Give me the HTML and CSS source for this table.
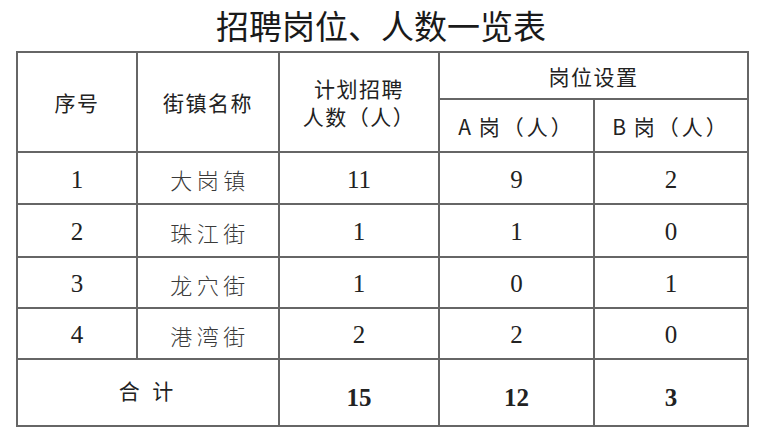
FILE: index.html
```html
<!DOCTYPE html>
<html lang="zh-CN">
<head>
<meta charset="utf-8">
<title>招聘岗位、人数一览表</title>
<link rel="stylesheet" href="styles.css">
</head>
<body>
<div class="page">
  <h1 class="title">招聘岗位、人数一览表</h1>
  <table class="grid">
    <colgroup>
      <col class="c1"><col class="c2"><col class="c3"><col class="c4"><col class="c5">
    </colgroup>
    <thead>
      <tr class="h1">
        <th rowspan="2">序号</th>
        <th rowspan="2">街镇名称</th>
        <th rowspan="2" class="plan">计划招聘<br>人数（人）</th>
        <th colspan="2">岗位设置</th>
      </tr>
      <tr class="h2">
        <th class="ab"><span class="lat">A</span> 岗（人）</th>
        <th class="ab"><span class="lat">B</span> 岗（人）</th>
      </tr>
    </thead>
    <tbody>
      <tr class="r1"><td class="num">1</td><td class="name">大岗镇</td><td class="num">11</td><td class="num">9</td><td class="num">2</td></tr>
      <tr class="r2"><td class="num">2</td><td class="name">珠江街</td><td class="num">1</td><td class="num">1</td><td class="num">0</td></tr>
      <tr class="r3"><td class="num">3</td><td class="name">龙穴街</td><td class="num">1</td><td class="num">0</td><td class="num">1</td></tr>
      <tr class="r4"><td class="num">4</td><td class="name">港湾街</td><td class="num">2</td><td class="num">2</td><td class="num">0</td></tr>
      <tr class="total"><td colspan="2" class="sum">合 计</td><td class="num bold">15</td><td class="num bold">12</td><td class="num bold">3</td></tr>
    </tbody>
  </table>
</div>
</body>
</html>
```
FILE: styles.css
```css
html, body {
  margin: 0;
  padding: 0;
  background: #ffffff;
}
.page {
  width: 758px;
  height: 438px;
  padding: 0 0 0 16px;
  box-sizing: border-box;
}
.title {
  margin: 0;
  width: 730px;
  height: 51px;
  line-height: 50px;
  text-align: center;
  font-family: "Noto Sans CJK SC", sans-serif;
  font-weight: 400;
  font-size: 33px;
  color: #1a1a1a;
}
.grid {
  border-collapse: collapse;
  table-layout: fixed;
  width: 731px;
}
.c1 { width: 120px; }
.c2 { width: 142px; }
.c3 { width: 160px; }
.c4 { width: 155px; }
.c5 { width: 154px; }
.grid th, .grid td {
  border: 2px solid #666;
  padding: 0;
  text-align: center;
  vertical-align: middle;
}
.grid th {
  font-family: "Noto Sans CJK SC", sans-serif;
  font-weight: 400;
  font-size: 21px;
  color: #222;
  letter-spacing: 1.5px;
  line-height: 28px;
}
.grid th.ab {
  letter-spacing: 3px;
}
.lat {
  font-family: "Noto Sans CJK SC", sans-serif;
  letter-spacing: 0;
}
.h1 { height: 47px; }
.h2 { height: 53px; }
.r1 { height: 52px; }
.r2 { height: 53px; }
.r3 { height: 51px; }
.r4 { height: 51px; }
.total { height: 67px; }
.num {
  font-family: "Liberation Serif", serif;
  font-size: 25px;
  color: #222;
  padding-top: 3px !important;
}
.bold {
  font-weight: 700;
  padding-top: 10px !important;
}
.name {
  font-family: "Noto Sans CJK SC", sans-serif;
  font-weight: 300;
  font-size: 22px;
  color: #3a3a3a;
  letter-spacing: 4.5px;
  padding-left: 4px !important;
  padding-top: 2px !important;
}
.sum {
  font-family: "Noto Sans CJK SC", sans-serif;
  font-size: 21px;
  color: #222;
  letter-spacing: 4px;
  padding-bottom: 6px !important;
}
```
